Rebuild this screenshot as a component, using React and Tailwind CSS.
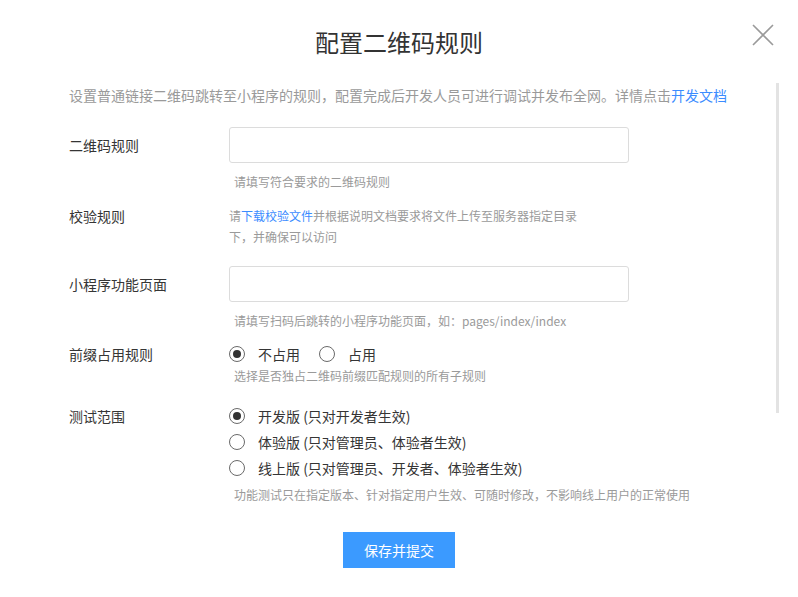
function Radio({ checked, label }) {
  return (
    <label className="flex items-center h-5 text-sm text-[#353535]">
      <span className="w-4 h-4 rounded-full border border-[#6a6a6a] flex items-center justify-center mr-[13px]">
        {checked && <span className="w-2 h-2 rounded-full bg-[#333]" />}
      </span>
      {label}
    </label>
  );
}

function Row({ label, labelClass = "leading-5", children }) {
  return (
    <div className="flex">
      <div className={`w-[160px] shrink-0 text-sm text-[#353535] ${labelClass}`}>{label}</div>
      <div className="flex-1">{children}</div>
    </div>
  );
}

export default function App() {
  return (
    <div
      className="relative w-[798px] h-[597px] bg-white overflow-hidden"
      style={{ fontFamily: '"Noto Sans CJK SC", "Noto Sans", sans-serif' }}
    >
      <button className="absolute left-[751px] top-[23px] w-6 h-6 text-[#9a9a9a]" aria-label="关闭">
        <svg viewBox="0 0 24 24" className="w-6 h-6" fill="none" stroke="currentColor" strokeWidth="1.6">
          <path d="M2 2 L22 22 M22 2 L2 22" />
        </svg>
      </button>
      <div className="absolute left-[776px] top-[83px] w-[3px] h-[330px] bg-[#e3e3e3]" />

      <h1 className="pt-[26px] text-center text-[24px] leading-8 text-[#333]">配置二维码规则</h1>

      <div className="px-[69px]">
        <p className="mt-[27px] text-sm leading-5 text-[#9a9a9a] whitespace-nowrap">
          设置普通链接二维码跳转至小程序的规则，配置完成后开发人员可进行调试并发布全网。详情点击
          <span className="text-[#3b8cff]">开发文档</span>
        </p>

        <div className="mt-[22px]">
          <Row label="二维码规则" labelClass="leading-[36px]">
            <div className="w-[400px] h-[36px] border border-[#dcdcdc] rounded-[3px]" />
            <p className="mt-[9px] pl-[5px] text-xs leading-5 text-[#9a9a9a]">请填写符合要求的二维码规则</p>
          </Row>
        </div>

        <div className="mt-[13px]">
          <Row label="校验规则" labelClass="leading-[22px]">
            <p className="w-[350px] text-xs leading-[21px] text-[#9a9a9a]">
              请<span className="text-[#3b8cff]">下载校验文件</span>并根据说明文档要求将文件上传至服务器指定目录下，并确保可以访问
            </p>
          </Row>
        </div>

        <div className="mt-[19px]">
          <Row label="小程序功能页面" labelClass="leading-[36px]">
            <div className="w-[400px] h-[36px] border border-[#dcdcdc] rounded-[3px]" />
            <p className="mt-[9px] pl-[5px] text-xs leading-5 text-[#9a9a9a]">
              请填写扫码后跳转的小程序功能页面，如：pages/index/index
            </p>
          </Row>
        </div>

        <div className="mt-[13px]">
          <Row label="前缀占用规则">
            <div className="flex gap-[19px]">
              <Radio checked label="不占用" />
              <Radio label="占用" />
            </div>
            <p className="mt-[2px] pl-[5px] text-xs leading-5 text-[#9a9a9a]">选择是否独占二维码前缀匹配规则的所有子规则</p>
          </Row>
        </div>

        <div className="mt-[20px]">
          <Row label="测试范围">
            <div className="flex flex-col gap-[6px]">
              <Radio checked label="开发版 (只对开发者生效)" />
              <Radio label="体验版 (只对管理员、体验者生效)" />
              <Radio label="线上版 (只对管理员、开发者、体验者生效)" />
            </div>
            <p className="mt-[7px] pl-[5px] text-xs leading-5 text-[#9a9a9a]">
              功能测试只在指定版本、针对指定用户生效、可随时修改，不影响线上用户的正常使用
            </p>
          </Row>
        </div>
      </div>

      <div className="mt-[27px] flex justify-center">
        <button className="w-[112px] h-[36px] bg-[#3b9aff] text-white text-sm">保存并提交</button>
      </div>
    </div>
  );
}
